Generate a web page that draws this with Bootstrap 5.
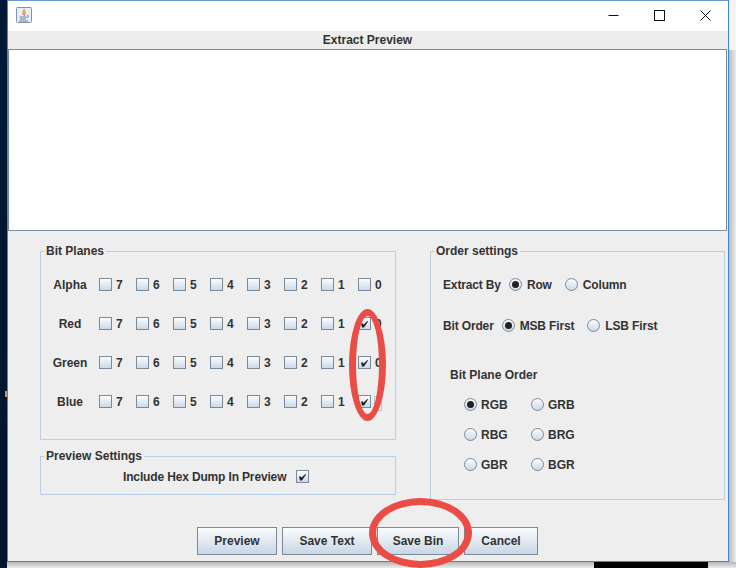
<!DOCTYPE html>
<html>
  <head>
    <title>Extract Preview</title>
    <link
      rel="stylesheet"
      href="https://cdn.jsdelivr.net/npm/bootstrap@5.3.0/dist/css/bootstrap.min.css"
    />
    <style>
      html, body { height: 100%; }
      body {
        background: linear-gradient(#001a38, #00152c);
        overflow: hidden;
        font-family: "Liberation Sans", Arial, sans-serif;
        font-size: 12px;
        font-weight: 700;
        line-height: 14px;
        color: #333;
      }
      .desk { position: relative; width: 736px; height: 568px; }
      .right-shade {
        position: absolute; left: 729px; top: 50px; width: 7px; height: 518px;
        background: linear-gradient(90deg, #bdbdbd, #ececec);
      }
      .right-top { position: absolute; left: 729px; top: 0; width: 7px; height: 50px; background: #f4f4f4; }
      .bottom-shade {
        position: absolute; left: 7px; top: 562px; width: 729px; height: 6px;
        background: linear-gradient(#b5b5b5, #ececec);
      }
      .bottom-black { position: absolute; left: 594px; top: 562px; width: 114px; height: 6px; background: #000; }
      .desk-speck { position: absolute; left: 5px; top: 391px; width: 2px; height: 6px; background: #c79a6a; }
      .win {
        position: absolute; left: 7px; top: 0; width: 722px; height: 562px;
        background: #eeeeee; border: 1px solid #3f87de; border-top-color: #6b9bd6;
        display: flex; flex-direction: column;
      }
      .titlebar { height: 30px; background: #fff; flex: none; padding: 0 0 2px 8px; }
      .ctl { width: 46px; height: 28px; }
      .caption { height: 18px; line-height: 18px; text-align: center; background: #ededed; flex: none; padding-right: 1px; }
      .preview-box {
        height: 182px; flex: none; background: #fff;
        border: 1px solid #7a8a99; border-bottom-color: #808d9b; margin-right: 1px;
      }
      .panels { margin-top: 20px; padding-left: 32px; gap: 34px; flex: none; }
      .left-col { width: 356px; }
      .grp { position: relative; border: 1px solid #b8cfe5; }
      .grp-title { position: absolute; top: -8px; left: 3px; background: #eeeeee; padding: 0 2px; }
      .grp-bits { height: 189px; padding: 26px 0 0 5px; }
      .grp-hex { height: 39px; margin-top: 16px; padding: 13px 0 0 82px; }
      .hex-label { margin-right: 10px; letter-spacing: -0.15px; }
      .grp-order { width: 295px; height: 249px; padding: 26px 0 0 12px; }
      .bit-row { height: 39px; }
      .bit-name { width: 48px; margin-right: 5px; text-align: center; }
      .bit-cell { width: 37px; }
      .chk {
        width: 13px; height: 13px; flex: none; margin-right: 4px;
        border: 1px solid #7a8a99; position: relative;
        background: linear-gradient(#fbfcfd, #ccd9e8);
      }
      .chk svg { position: absolute; left: 0; top: 0; }
      .rad {
        width: 13px; height: 13px; flex: none; border-radius: 50%;
        border: 1px solid #7a8a99; position: relative;
        background: linear-gradient(#fbfcfd, #ccd9e8);
      }
      .rad.on::after {
        content: ""; position: absolute; left: 2px; top: 2px;
        width: 7px; height: 7px; border-radius: 50%; background: #222;
      }
      .order-row { height: 41px; letter-spacing: -0.15px; }
      .order-row .rad { margin-left: 8px; margin-right: 5px; }
      .gap-r { margin-right: 5px; }
      .plane-title { margin: 8px 0 16px 7px; }
      .plane-grid { padding-left: 21px; display: grid; grid-template-columns: 67px 67px; grid-auto-rows: 30px; }
      .plane-grid .rad { margin-right: 4px; }
      .btn-bar { margin-top: 27px; padding-left: 189px; gap: 5px; flex: none; }
      .jbtn {
        height: 28px; flex: none; padding: 0; color: #333; font-size: 12px; font-weight: 700; line-height: 26px;
        border: 1px solid #7a8a99; border-radius: 0;
        background: linear-gradient(#fbfcfd, #c9d6e6);
      }
      .w-prev { width: 80px; }
      .w-text { width: 90px; }
      .w-bin { width: 82px; }
      .w-cancel { width: 74px; }
      .ghost-box { position: absolute; left: 374px; top: 396px; width: 8px; height: 15px; border: 1px solid #b8c4d2; }
      .mark-ring { position: absolute; border: 7px solid #ea4c46; border-radius: 50%; pointer-events: none; }
      .ring-a { left: 349px; top: 309px; width: 37px; height: 112px; }
      .ring-b { left: 369px; top: 498px; width: 103px; height: 70px; }
    </style>
  </head>

  <body>
    <div class="desk">
      <div class="right-top"></div>
      <div class="right-shade"></div>
      <div class="bottom-shade"></div>
      <div class="bottom-black"></div>
      <div class="desk-speck"></div>

      <div class="win">
        <div class="titlebar d-flex align-items-center">
          <svg width="16" height="16" viewBox="0 0 16 16">
            <rect x="0.5" y="0.5" width="15" height="15" rx="1" fill="#e8eef5" stroke="#8093a8" />
            <path d="M8 2c1 2-2 3-1 5 .3.8 1 1 1.500 1.200C8 7 9.800 6 9 4" fill="none" stroke="#e2812c" stroke-width="1.200" />
            <path d="M3.500 10h7M4 12h6M3 14h9" stroke="#6f87a3" />
            <path d="M11 8.500c2-.5 2 2 -.5 2" fill="none" stroke="#6f87a3" />
          </svg>
          <div class="ms-auto d-flex">
            <div class="ctl d-flex align-items-center justify-content-center">
              <svg width="11" height="11" viewBox="0 0 11 11"><path d="M0.500 5.500h10" stroke="#111" /></svg>
            </div>
            <div class="ctl d-flex align-items-center justify-content-center">
              <svg width="11" height="11" viewBox="0 0 11 11"><rect x="0.500" y="0.500" width="10" height="10" fill="none" stroke="#111" /></svg>
            </div>
            <div class="ctl d-flex align-items-center justify-content-center">
              <svg width="11" height="11" viewBox="0 0 11 11"><path d="M0.500 0.500l10 10M10.500 0.500l-10 10" stroke="#111" /></svg>
            </div>
          </div>
        </div>

        <div class="caption">Extract Preview</div>
        <div class="preview-box"></div>

        <div class="panels d-flex">
          <div class="left-col">
            <div class="grp grp-bits">
              <span class="grp-title">Bit Planes</span>
              <div id="bit-rows"></div>
            </div>
            <div class="grp grp-hex d-flex align-items-start">
              <span class="grp-title">Preview Settings</span>
              <span class="hex-label">Include Hex Dump In Preview</span>
              <span class="chk"><svg width="11" height="11" viewBox="0 0 11 11"><path d="M2 5.500h2l.4 1.200L8.500 3l.6.500L5 9.500H3z" fill="#222" /></svg></span>
            </div>
          </div>

          <div class="grp grp-order">
            <span class="grp-title">Order settings</span>
            <div class="order-row d-flex">
              <span>Extract By</span>
              <span class="rad on"></span><span class="gap-r">Row</span>
              <span class="rad"></span><span>Column</span>
            </div>
            <div class="order-row d-flex">
              <span>Bit Order</span>
              <span class="rad on"></span><span class="gap-r">MSB First</span>
              <span class="rad"></span><span>LSB First</span>
            </div>
            <div class="plane-title">Bit Plane Order</div>
            <div class="plane-grid">
              <div class="d-flex"><span class="rad on"></span>RGB</div>
              <div class="d-flex"><span class="rad"></span>GRB</div>
              <div class="d-flex"><span class="rad"></span>RBG</div>
              <div class="d-flex"><span class="rad"></span>BRG</div>
              <div class="d-flex"><span class="rad"></span>GBR</div>
              <div class="d-flex"><span class="rad"></span>BGR</div>
            </div>
          </div>
        </div>

        <div class="btn-bar d-flex">
          <button type="button" class="btn jbtn w-prev">Preview</button>
          <button type="button" class="btn jbtn w-text">Save Text</button>
          <button type="button" class="btn jbtn w-bin">Save Bin</button>
          <button type="button" class="btn jbtn w-cancel">Cancel</button>
        </div>
      </div>

      <div class="ghost-box"></div>
      <div class="mark-ring ring-a"></div>
      <div class="mark-ring ring-b"></div>
    </div>

    <script>
      // build the four rows of bit plane checkboxes
      var tick = '<svg width="11" height="11" viewBox="0 0 11 11"><path d="M2 5.500h2l.4 1.200L8.500 3l.6.500L5 9.500H3z" fill="#222" /></svg>';
      var html = "";
      ["Alpha", "Red", "Green", "Blue"].forEach(function (name) {
        html += '<div class="bit-row d-flex"><div class="bit-name">' + name + "</div>";
        for (var b = 7; b >= 0; b--) {
          var on = b === 0 && name !== "Alpha";
          var hideDigit = b === 0 && name === "Blue";
          html += '<div class="bit-cell d-flex"><span class="chk">' + (on ? tick : "") + "</span>" + (hideDigit ? "" : b) + "</div>";
        }
        html += "</div>";
      });
      document.getElementById("bit-rows").innerHTML = html;
    </script>
    <script src="https://cdn.jsdelivr.net/npm/bootstrap@5.3.0/dist/js/bootstrap.bundle.min.js"></script>
  </body>
</html>
